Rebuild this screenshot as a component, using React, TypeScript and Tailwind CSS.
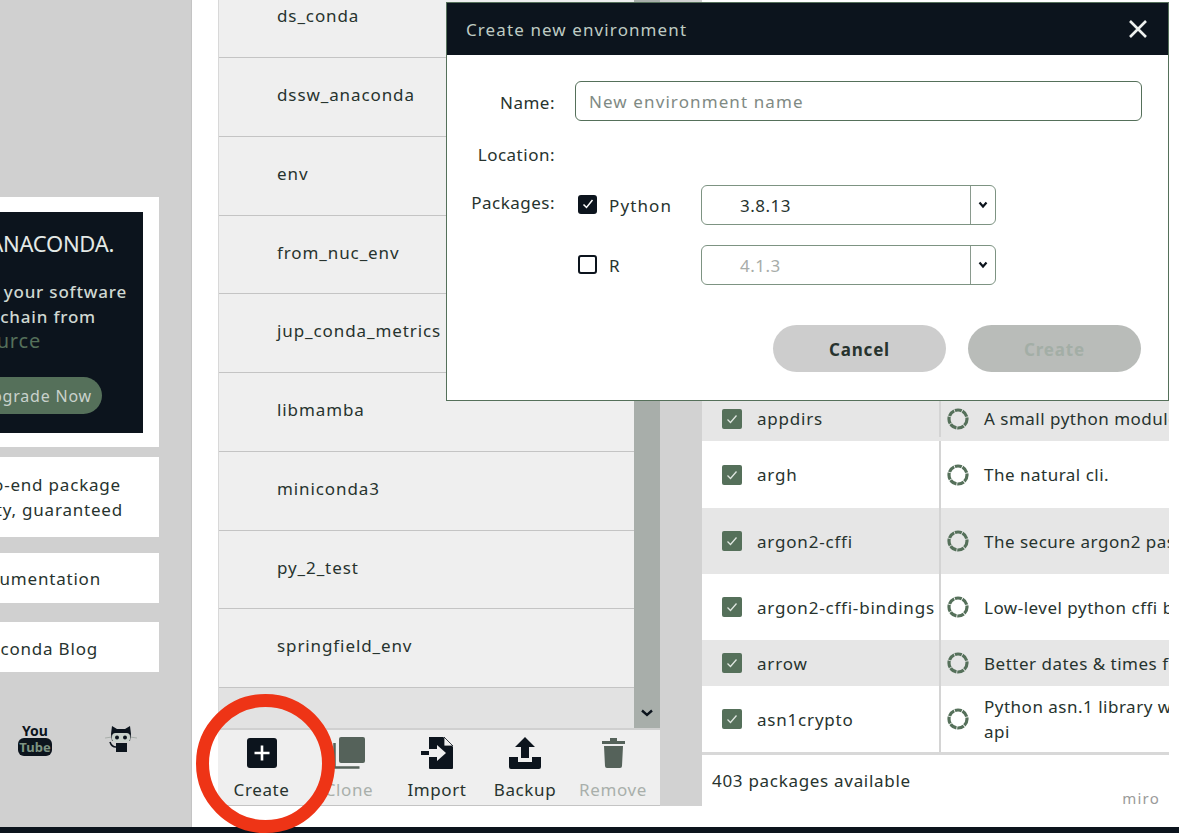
import React from "react";

const envs = ["ds_conda", "dssw_anaconda", "env", "from_nuc_env", "jup_conda_metrics", "libmamba", "miniconda3", "py_2_test", "springfield_env"];

const rows = [
  { name: "appdirs", desc: ["A small python module for determining appropriate"], h: "h-[41px] pb-[4px]", bg: "bg-[#e6e6e6]" },
  { name: "argh", desc: ["The natural cli."], h: "h-[67px]", bg: "bg-white" },
  { name: "argon2-cffi", desc: ["The secure argon2 password hash algorithm"], h: "h-[66px]", bg: "bg-[#e6e6e6]" },
  { name: "argon2-cffi-bindings", desc: ["Low-level python cffi bindings for argon2"], h: "h-[66px]", bg: "bg-white" },
  { name: "arrow", desc: ["Better dates & times for python"], h: "h-[46px]", bg: "bg-[#e6e6e6]" },
  { name: "asn1crypto", desc: ["Python asn.1 library with a focus on performance and a pythonic", "api"], h: "h-[66px]", bg: "bg-white" },
];

function Ring() {
  return (
    <svg width="24" height="24" viewBox="0 0 24 24" className="shrink-0">
      <circle cx="12" cy="12" r="9" fill="none" stroke="#55705a" strokeWidth="3.2" strokeDasharray="7 0.8" />
    </svg>
  );
}

function GreenCheck() {
  return (
    <div className="w-[20px] h-[20px] rounded-[2px] bg-[#55705a] flex items-center justify-center shrink-0">
      <svg width="14" height="14" viewBox="0 0 14 14"><path d="M2.5 7.5l3 3 6-7" fill="none" stroke="#dfe6e0" strokeWidth="1.3" /></svg>
    </div>
  );
}

function ToolButton({ label, muted, children, w }: { label: string; muted?: boolean; children: React.ReactNode; w: string }) {
  return (
    <div className={`${w} flex flex-col items-center`}>
      <div className="h-[32px] flex items-center justify-center">{children}</div>
      <div className={`mt-[9px] text-[17px] leading-[24px] tracking-[0.6px] ${muted ? "text-[#a9afab]" : "text-[#27332e]"}`}>{label}</div>
    </div>
  );
}

function Select({ value, muted }: { value: string; muted?: boolean }) {
  return (
    <div className="w-[295px] h-[40px] border-[1.5px] border-[#7d9382] rounded-[6px] flex items-center">
      <div className={`flex-1 pl-[38px] pt-[2px] text-[17px] ${muted ? "text-[#a7aca9]" : "text-[#27332e]"}`}>{value}</div>
      <div className="w-[25px] h-full border-l border-[#8a9a8e] flex items-center justify-center">
        <svg width="12" height="10" viewBox="0 0 12 10"><path d="M2.5 2.5L6 6.5l3.5-4" fill="none" stroke="#0c141d" strokeWidth="2.2" /></svg>
      </div>
    </div>
  );
}

export default function App() {
  return (
    <div className="relative w-[1179px] h-[833px] overflow-hidden flex flex-col bg-white font-['Noto_Sans',sans-serif] text-[#27332e] tracking-[0.8px]">
      <div className="flex h-[827px]">
        {/* sidebar */}
        <aside className="w-[192px] shrink-0 bg-[#d0d0d0] border-r border-[#c4c4c4] pt-[197px] flex flex-col overflow-hidden">
          <div className="w-[159px] h-[250px] bg-white pt-[15px]">
            <div className="w-[143px] h-[221px] bg-[#0c141d] pt-[16px] text-[#cfd8d2] overflow-hidden">
              <div className="flex justify-end pr-[29px] whitespace-nowrap text-[22px] leading-[30px] tracking-[-0.3px] text-[#e4e9e6]">ANACONDA.</div>
              <div className="mt-[22px] flex justify-end pr-[16px] whitespace-nowrap text-[17px] leading-[24px] font-medium">Secure your software</div>
              <div className="mt-[1px] flex justify-end pr-[47px] whitespace-nowrap text-[17px] leading-[24px] font-medium">supply chain from</div>
              <div className="flex justify-end pr-[102px] whitespace-nowrap text-[20px] leading-[24px] text-[#55705a]">the source</div>
              <div className="mt-[24px] flex justify-end pr-[41px]">
                <div className="whitespace-nowrap shrink-0 h-[37px] rounded-r-full bg-[#55705a] pl-[30px] pr-[10px] flex items-center text-[16px] text-[#c9d2cc]">Upgrade Now</div>
              </div>
            </div>
          </div>
          <div className="mt-[10px] w-[159px] h-[80px] bg-white pt-[15px] text-[17px] leading-[25px]">
            <div className="flex justify-end pr-[38px] whitespace-nowrap">End-to-end package</div>
            <div className="flex justify-end pr-[36px] whitespace-nowrap">security, guaranteed</div>
          </div>
          <div className="mt-[16px] w-[159px] h-[50px] bg-white flex items-center justify-end pr-[58px] pt-[2px] whitespace-nowrap text-[17px]">Documentation</div>
          <div className="mt-[19px] w-[159px] h-[50px] bg-white flex items-center justify-end pr-[61px] pt-[4px] whitespace-nowrap text-[17px]">Anaconda Blog</div>
          <div className="mt-[51px] flex items-start">
            <div className="ml-[18px] w-[34px] flex flex-col items-center text-[#0c141d] font-bold tracking-normal">
              <div className="text-[14px] leading-[15px]">You</div>
              <div className="w-[34px] h-[18px] rounded-[6px] bg-[#0c141d] text-[#7d9382] text-[13px] leading-[18px] text-center">Tube</div>
            </div>
            <svg className="ml-[53px] mt-[2px]" width="32" height="30" viewBox="0 0 32 30">
              <path d="M0 13l7-1M32 13l-7-1" stroke="#a9afab" strokeWidth="1.2" />
              <path d="M7 1l5 3h8l5-3 1 8-1 7H7l-1-7z" fill="#0c141d" />
              <rect x="7" y="8" width="18" height="9" rx="3.5" fill="#c9d2cc" />
              <circle cx="12" cy="12.5" r="2" fill="#0c141d" />
              <circle cx="20" cy="12.5" r="2" fill="#0c141d" />
              <path d="M11 18h11v9H11z" fill="#0c141d" />
              <path d="M5 17c1 3 3 5 6 5" fill="none" stroke="#0c141d" strokeWidth="1.6" />
            </svg>
          </div>
        </aside>

        {/* environments column */}
        <section className="ml-[26px] w-[442px] shrink-0 h-[806px] flex flex-col">
          <div className="flex flex-1 min-h-0">
            <div className="w-[416px] flex flex-col bg-[#e2e2e2] border-l border-[#d8d8d8] tracking-[0.9px]">
              <div className="h-[58px] shrink-0 flex items-center pl-[58px] pb-[26px] pt-[1px] bg-[#efefef] border-b border-[#c4c4c4] text-[17px]">{envs[0]}</div>
              {envs.slice(1).map((e) => (
                <div key={e} className="h-[78.75px] shrink-0 flex items-center pl-[58px] pb-[4px] bg-[#efefef] border-b border-[#c4c4c4] text-[17px]">{e}</div>
              ))}
            </div>
            <div className="w-[26px] flex flex-col bg-[#a8aeaa]">
              <div className="flex-1" />
              <div className="h-[30px] mt-[3px] flex items-center justify-center">
                <svg width="14" height="10" viewBox="0 0 14 10"><path d="M2 2.5l5 4.5 5-4.5" fill="none" stroke="#0c141d" strokeWidth="2.4" /></svg>
              </div>
            </div>
          </div>
          <div className="h-[78px] shrink-0 bg-[#efefef] border-t-2 border-[#d0d0d0] border-b border-b-[#c4c4c4] flex pt-[7px]">
            <ToolButton label="Create" w="w-[87px]">
              <svg width="30" height="30" viewBox="0 0 30 30"><rect width="30" height="30" rx="3" fill="#0c141d" /><path d="M15 7.5v15M7.5 15h15" stroke="#fff" strokeWidth="2.6" /></svg>
            </ToolButton>
            <ToolButton label="Clone" muted w="w-[88px]">
              <svg width="32" height="32" viewBox="0 0 32 32"><rect x="6" y="0" width="26" height="26" rx="2" fill="#55625a" /><path d="M1.5 6v24.500h25" fill="none" stroke="#55625a" strokeWidth="2.500" /></svg>
            </ToolButton>
            <ToolButton label="Import" w="w-[88px]">
              <svg width="32" height="32" viewBox="0 0 32 32"><path d="M8 0h14l10 10v21a1 1 0 0 1-1 1H9a1 1 0 0 1-1-1V20h8v4l9-8-9-8v4H8z" fill="#0c141d" /><path d="M23 0l9 9h-9z" fill="#efefef" stroke="#0c141d" strokeWidth="0.8" /><path d="M0 14h8v4H0z" fill="#0c141d" /><path d="M8 14.500h9v-4l7 5.500-7 5.500v-4H8z" fill="#efefef" /></svg>
            </ToolButton>
            <ToolButton label="Backup" w="w-[88px]">
              <svg width="32" height="32" viewBox="0 0 32 32"><path d="M16 0l10 10h-6v11h-8V10H6z" fill="#0c141d" /><path d="M0 20h9v5h14v-5h9v10a2 2 0 0 1-2 2H2a2 2 0 0 1-2-2z" fill="#0c141d" /></svg>
            </ToolButton>
            <ToolButton label="Remove" muted w="w-[88px]">
              <svg width="23" height="30" viewBox="0 0 23 30"><path d="M0 3h23v3H0zM8 0h7v3H8z" fill="#55625a" /><path d="M2 8h19l-1 20a2 2 0 0 1-2 2H5a2 2 0 0 1-2-2z" fill="#55625a" /></svg>
            </ToolButton>
          </div>
        </section>

        {/* packages column */}
        <section className="w-[509px] h-[806px] shrink-0 flex flex-col bg-[#d2d2d2] pl-[42px] overflow-hidden">
          <div className="w-[467px] flex-1 flex flex-col justify-end bg-white overflow-hidden">
            {rows.map((r) => (
              <div key={r.name} className={`${r.h} ${r.bg} shrink-0 flex items-center text-[17px] leading-[25px]`}>
                <div className="w-[239px] h-full flex items-center pl-[20px] gap-[15px] border-r-2 border-[#d4d4d4] whitespace-nowrap tracking-[0.8px]">
                  <GreenCheck />
                  <span>{r.name}</span>
                </div>
                <div className="flex items-center pl-[5px] gap-[14px] min-w-0 flex-1 overflow-hidden">
                  <Ring />
                  <div className="whitespace-nowrap tracking-[0.5px]">
                    {r.desc.map((d) => <div key={d}>{d}</div>)}
                  </div>
                </div>
              </div>
            ))}
          </div>
          <div className="relative w-[467px] h-[54px] shrink-0 bg-white border-t-[3px] border-[#d8d8d8] flex items-center pl-[10px] text-[17px] tracking-[0.7px]">
            403 packages available
            <span className="absolute right-[9px] bottom-[-1px] text-[15px] leading-[18px] tracking-[1.2px] text-[#9a9a9a]">miro</span>
          </div>
        </section>
      </div>
      <div className="h-[6px] bg-[#0c141d] shrink-0" />

      {/* dialog */}
      <div className="absolute left-[446px] top-[2px] w-[723px] h-[399px] bg-white border border-[#55705a] flex flex-col">
        <div className="h-[52px] shrink-0 bg-[#0c141d] flex items-center justify-between pl-[19px] pr-[20px] pt-[2px] text-[17px] tracking-[1.1px] text-[#bfcbc3]">
          <span>Create new environment</span>
          <svg className="-mt-[2px]" width="20" height="20" viewBox="0 0 20 20"><path d="M2 2l16 16M18 2L2 18" stroke="#eef1ef" strokeWidth="2.600" /></svg>
        </div>
        <div className="flex-1 flex flex-col pt-[26px] text-[17px] leading-[24px] tracking-[0.5px]">
          <div className="flex items-center">
            <div className="w-[108px] text-right pt-[4px]">Name:</div>
            <div className="ml-[20px] w-[567px] h-[40px] border-[1.5px] border-[#55705a] rounded-[6px] flex items-center pl-[13px] pt-[2px] text-[#7f8a84] tracking-[1.1px]">New environment name</div>
          </div>
          <div className="mt-[22px] w-[108px] text-right">Location:</div>
          <div className="mt-[24px] flex">
            <div className="w-[108px] text-right -mt-[4px] pt-[4px]">Packages:</div>
            <div className="ml-[23px] flex flex-col gap-[20px] -mt-[6px]">
              <div className="flex items-center">
                <div className="w-[19px] h-[19px] rounded-[3px] bg-[#0c141d] flex items-center justify-center -mt-[2px]">
                  <svg width="14" height="14" viewBox="0 0 14 14"><path d="M2.500 7.500l3 3 6-7.500" fill="none" stroke="#fff" strokeWidth="1.500" /></svg>
                </div>
                <span className="ml-[12px] w-[92px] pt-[1px] tracking-[1.1px]">Python</span>
                <Select value="3.8.13" />
              </div>
              <div className="flex items-center">
                <div className="w-[19px] h-[19px] rounded-[3px] border-2 border-[#0c141d] -mt-[2px]" />
                <span className="ml-[12px] w-[92px] pt-[2px]">R</span>
                <Select value="4.1.3" muted />
              </div>
            </div>
          </div>
          <div className="mt-[40px] flex justify-end gap-[22px] pr-[27px]">
            <div className="w-[173px] h-[47px] rounded-full bg-[#cdcdcd] flex items-center justify-center pt-[2px] font-bold tracking-[0.8px] text-[#27332e]">Cancel</div>
            <div className="w-[173px] h-[47px] rounded-full bg-[#b9bcb9] flex items-center justify-center pt-[2px] font-bold tracking-[0.8px] text-[#a3aea6]">Create</div>
          </div>
        </div>
      </div>

      {/* annotation */}
      <div className="absolute left-[196px] top-[694px] w-[139px] h-[139px] rounded-full border-[13px] border-[#ee3416]" />
    </div>
  );
}
